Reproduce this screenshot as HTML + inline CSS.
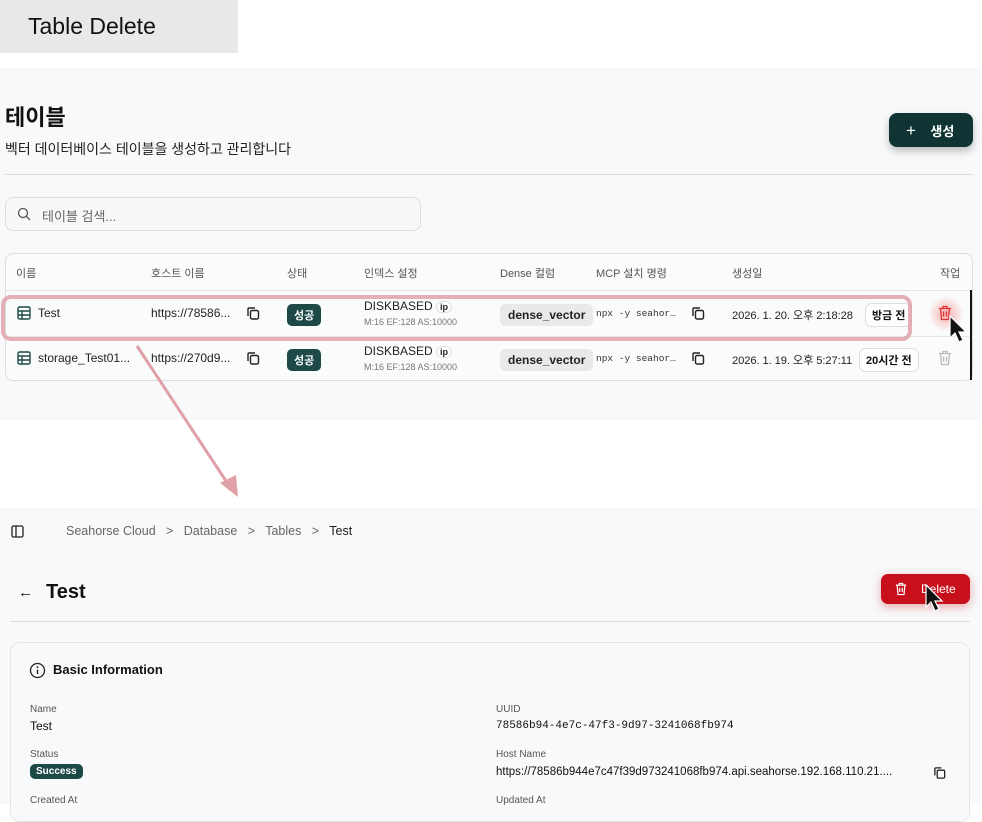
<!DOCTYPE html>
<html><head><meta charset="utf-8"><style>
*{box-sizing:border-box;margin:0;padding:0}
body{width:982px;height:804px;background:#fff;position:relative;overflow:hidden;font-family:"Liberation Sans","Noto Sans CJK KR",sans-serif;color:#111}
.a{position:absolute}
.p{background:#f8f9fa}
.h{font-size:11px;color:#555}
.t{font-size:12px;color:#222}
.badge{background:#1d4a46;color:#fff;font-size:11px;font-weight:bold;border-radius:5px;padding:3px 7px}
.dv{background:#e8e9ea;border-radius:5px;font-size:12px;font-weight:bold;padding:4px 8px;color:#222}
.mono{font-family:"Liberation Mono",monospace;font-size:9.5px;color:#333}
.sm{font-size:9px;color:#777}
.pill{border:1px solid #ddd;border-radius:7px;font-size:11px;font-weight:bold;padding:3px 6px;background:#fff}
.dt{font-size:11.2px;color:#222;letter-spacing:-0.1px}
</style></head><body>
<div class="a" style="left:0;top:0;width:238px;height:53px;background:#e8e8e8"></div>
<div class="a" style="left:28px;top:13px;font-size:23px;color:#111">Table Delete</div>

<div class="a p" style="left:0;top:68px;width:982px;height:352px"></div>
<div class="a" style="left:5px;top:100px;font-size:22px;font-weight:bold">테이블</div>
<div class="a" style="left:5px;top:139px;font-size:14px;color:#222">벡터 데이터베이스 테이블을 생성하고 관리합니다</div>
<div class="a" style="left:889px;top:113px;width:84px;height:34px;background:#0f3433;border-radius:8px;box-shadow:0 4px 8px rgba(0,0,0,.25);color:#fff;font-size:13px;font-weight:bold;padding:8px 0 0 17px"><span style="font-size:17px;font-weight:normal;line-height:14px">+</span>&nbsp;&nbsp;&nbsp;&nbsp;생성</div>
<div class="a" style="left:5px;top:174px;width:968px;height:1px;background:#ddd"></div>
<div class="a" style="left:5px;top:197px;width:416px;height:34px;border:1px solid #ddd;border-radius:8px;background:#f7f8f8"></div>
<svg class="a" style="left:16px;top:206px" width="16" height="16" viewBox="0 0 16 16"><circle cx="7" cy="7" r="4.5" fill="none" stroke="#555" stroke-width="1.3"/><path d="M10.5 10.5L14 14" stroke="#555" stroke-width="1.3"/></svg>
<div class="a" style="left:42px;top:206px;font-size:13px;color:#666">테이블 검색...</div>

<div class="a" style="left:5px;top:253px;width:968px;height:128px;border:1px solid #ddd;border-radius:8px;background:#fafbfb"></div>
<div class="a" style="left:5px;top:290px;width:968px;height:1px;background:#e5e5e5"></div>
<div class="a" style="left:5px;top:336px;width:968px;height:1px;background:#e5e5e5"></div>
<div class="a h" style="left:16px;top:265px">이름</div>
<div class="a h" style="left:151px;top:265px">호스트 이름</div>
<div class="a h" style="left:287px;top:265px">상태</div>
<div class="a h" style="left:364px;top:265px">인덱스 설정</div>
<div class="a h" style="left:500px;top:265px">Dense 컬럼</div>
<div class="a h" style="left:596px;top:265px">MCP 설치 명령</div>
<div class="a h" style="left:732px;top:265px">생성일</div>
<div class="a h" style="left:940px;top:265px">작업</div>

<!-- row1 -->
<svg class="a" style="left:17px;top:306px" width="14" height="14" viewBox="0 0 14 14"><rect x="1" y="1" width="12" height="12" rx="1.5" fill="none" stroke="#1d4a46" stroke-width="1.4"/><path d="M1 5h12M1 9h12M5 5v8" stroke="#1d4a46" stroke-width="1.4"/></svg>
<div class="a t" style="left:38px;top:306px">Test</div>
<div class="a t" style="left:151px;top:306px">https://78586...</div>
<svg class="a" style="left:246px;top:306px" width="15" height="15" viewBox="0 0 15 15"><rect x="4.5" y="4.5" width="8" height="8.5" rx="1.5" fill="none" stroke="#222" stroke-width="1.4"/><path d="M2 10V3a1 1 0 0 1 1-1h6" fill="none" stroke="#222" stroke-width="1.4"/></svg>
<div class="a badge" style="left:287px;top:304px">성공</div>
<div class="a t" style="left:364px;top:299px">DISKBASED <span style="font-size:9px;font-weight:bold;border:1px solid #ddd;border-radius:6px;padding:0 3px;background:#fff">ip</span></div>
<div class="a sm" style="left:364px;top:317px">M:16 EF:128 AS:10000</div>
<div class="a dv" style="left:500px;top:304px">dense_vector</div>
<div class="a mono" style="left:596px;top:308px">npx -y seahor…</div>
<svg class="a" style="left:691px;top:306px" width="15" height="15" viewBox="0 0 15 15"><rect x="4.5" y="4.5" width="8" height="8.5" rx="1.5" fill="none" stroke="#222" stroke-width="1.4"/><path d="M2 10V3a1 1 0 0 1 1-1h6" fill="none" stroke="#222" stroke-width="1.4"/></svg>
<div class="a dt" style="left:732px;top:307px">2026. 1. 20. 오후 2:18:28</div>
<div class="a pill" style="left:865px;top:303px">방금 전</div>
<div class="a" style="left:928px;top:296px;width:36px;height:36px;border-radius:50%;background:radial-gradient(circle,rgba(240,120,120,.6),rgba(240,120,120,0) 70%)"></div>
<svg class="a" style="left:938px;top:305px" width="14" height="16" viewBox="0 0 14 16"><path d="M1 3.5h12M5 3.5V1.5h4v2M2.5 3.5l1 11h7l1-11M5.5 6.5v5M8.5 6.5v5" fill="none" stroke="#d33" stroke-width="1.3"/></svg>

<!-- row2 -->
<svg class="a" style="left:17px;top:351px" width="14" height="14" viewBox="0 0 14 14"><rect x="1" y="1" width="12" height="12" rx="1.5" fill="none" stroke="#1d4a46" stroke-width="1.4"/><path d="M1 5h12M1 9h12M5 5v8" stroke="#1d4a46" stroke-width="1.4"/></svg>
<div class="a t" style="left:38px;top:351px">storage_Test01...</div>
<div class="a t" style="left:151px;top:351px">https://270d9...</div>
<svg class="a" style="left:246px;top:351px" width="15" height="15" viewBox="0 0 15 15"><rect x="4.5" y="4.5" width="8" height="8.5" rx="1.5" fill="none" stroke="#222" stroke-width="1.4"/><path d="M2 10V3a1 1 0 0 1 1-1h6" fill="none" stroke="#222" stroke-width="1.4"/></svg>
<div class="a badge" style="left:287px;top:349px">성공</div>
<div class="a t" style="left:364px;top:344px">DISKBASED <span style="font-size:9px;font-weight:bold;border:1px solid #ddd;border-radius:6px;padding:0 3px;background:#fff">ip</span></div>
<div class="a sm" style="left:364px;top:362px">M:16 EF:128 AS:10000</div>
<div class="a dv" style="left:500px;top:349px">dense_vector</div>
<div class="a mono" style="left:596px;top:353px">npx -y seahor…</div>
<svg class="a" style="left:691px;top:351px" width="15" height="15" viewBox="0 0 15 15"><rect x="4.5" y="4.5" width="8" height="8.5" rx="1.5" fill="none" stroke="#222" stroke-width="1.4"/><path d="M2 10V3a1 1 0 0 1 1-1h6" fill="none" stroke="#222" stroke-width="1.4"/></svg>
<div class="a dt" style="left:732px;top:352px">2026. 1. 19. 오후 5:27:11</div>
<div class="a pill" style="left:859px;top:348px">20시간 전</div>
<svg class="a" style="left:938px;top:350px" width="14" height="16" viewBox="0 0 14 16"><path d="M1 3.5h12M5 3.5V1.5h4v2M2.5 3.5l1 11h7l1-11M5.5 6.5v5M8.5 6.5v5" fill="none" stroke="#bbb" stroke-width="1.3"/></svg>
<div class="a" style="left:970px;top:290px;width:2px;height:90px;background:#111"></div>

<!-- highlight + arrow -->
<div class="a" style="left:1px;top:295px;width:911px;height:46px;border:4px solid rgba(220,150,160,.75);border-radius:10px"></div>
<svg class="a" style="left:0;top:0" width="982" height="804"><path d="M137 346L228 484" stroke="#e0a0a8" stroke-width="3"/><path d="M220 483L238 497L236 475Z" fill="#e0a0a8"/>
<path d="M950 316l0 22 5-5 4 9 4-2-4-8 7 0z" fill="#111" stroke="#fff" stroke-width="1.2"/>
</svg>

<!-- panel 2 -->
<div class="a p" style="left:0;top:508px;width:982px;height:296px"></div>
<svg class="a" style="left:11px;top:525px" width="13" height="13" viewBox="0 0 13 13"><rect x="1" y="1" width="11" height="11" rx="1.5" fill="none" stroke="#222" stroke-width="1.3"/><path d="M5 1v11" stroke="#222" stroke-width="1.3"/></svg>
<div class="a" style="left:66px;top:524px;font-size:12.5px;color:#666">Seahorse Cloud &nbsp;&nbsp;&gt;&nbsp;&nbsp; Database &nbsp;&nbsp;&gt;&nbsp;&nbsp; Tables &nbsp;&nbsp;&gt;&nbsp;&nbsp; <span style="color:#222">Test</span></div>
<div class="a" style="left:18px;top:584px;font-size:15px">←</div>
<div class="a" style="left:46px;top:581px;font-size:20px;font-weight:bold">Test</div>
<div class="a" style="left:881px;top:574px;width:89px;height:30px;background:#c8101c;border-radius:7px;box-shadow:0 3px 10px rgba(200,20,30,.35);color:#fff;font-size:12px;padding:8px 0 0 40px">Delete</div>
<svg class="a" style="left:895px;top:582px" width="12" height="14" viewBox="0 0 14 16"><path d="M1 3.5h12M5 3.5V1.5h4v2M2.5 3.5l1 11h7l1-11M5.5 6.5v5M8.5 6.5v5" fill="none" stroke="#fff" stroke-width="1.4"/></svg>
<svg class="a" style="left:922px;top:583px" width="30" height="40"><path d="M4 2l0 22 5-5 4 9 4-2-4-8 7 0z" fill="#111" stroke="#fff" stroke-width="1.2"/></svg>
<div class="a" style="left:10px;top:621px;width:960px;height:1px;background:#ddd"></div>
<div class="a" style="left:10px;top:642px;width:960px;height:180px;border:1px solid #e5e5e5;border-radius:10px;background:#f8f9fa"></div>
<svg class="a" style="left:29px;top:662px" width="17" height="17" viewBox="0 0 17 17"><circle cx="8.5" cy="8.5" r="7" fill="none" stroke="#222" stroke-width="1.3"/><path d="M8.5 7.5v4.5" stroke="#222" stroke-width="1.4"/><circle cx="8.5" cy="5.2" r=".9" fill="#222"/></svg>
<div class="a" style="left:53px;top:662px;font-size:13px;font-weight:bold">Basic Information</div>
<div class="a" style="left:30px;top:704px;font-size:10px;color:#555">Name</div>
<div class="a" style="left:30px;top:719px;font-size:12px">Test</div>
<div class="a" style="left:30px;top:749px;font-size:10px;color:#555">Status</div>
<div class="a badge" style="left:30px;top:764px;font-size:10px;padding:2px 6px">Success</div>
<div class="a" style="left:30px;top:795px;font-size:10px;color:#555">Created At</div>
<div class="a" style="left:496px;top:704px;font-size:10px;color:#555">UUID</div>
<div class="a" style="left:496px;top:720px;font-family:'Liberation Mono',monospace;font-size:11px">78586b94-4e7c-47f3-9d97-3241068fb974</div>
<div class="a" style="left:496px;top:749px;font-size:10px;color:#555">Host Name</div>
<div class="a" style="left:496px;top:766px;font-size:11.5px">https://78586b944e7c47f39d973241068fb974.api.seahorse.192.168.110.21....</div>
<svg class="a" style="left:933px;top:766px" width="14" height="14" viewBox="0 0 15 15"><rect x="4.5" y="4.5" width="8" height="8.5" rx="1.5" fill="none" stroke="#222" stroke-width="1.4"/><path d="M2 10V3a1 1 0 0 1 1-1h6" fill="none" stroke="#222" stroke-width="1.4"/></svg>
<div class="a" style="left:496px;top:795px;font-size:10px;color:#555">Updated At</div>
</body></html>
